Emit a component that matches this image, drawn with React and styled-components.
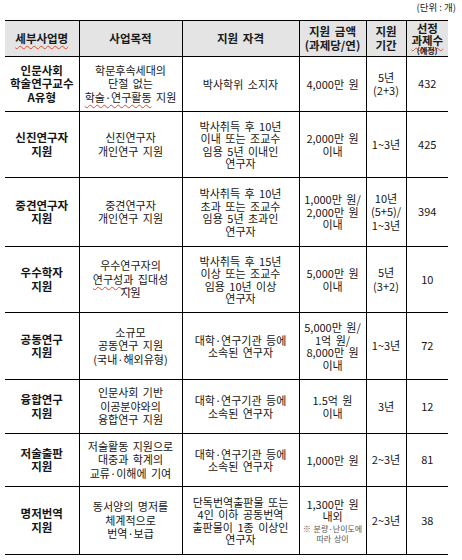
import React from 'react';
import styled, { createGlobalStyle } from 'styled-components';

const GlobalStyle = createGlobalStyle`
    html, body {
        margin: 0;
        padding: 0;
        background: #fff;
    }
    body {
        font-family: "Noto Sans CJK KR", "Noto Sans", sans-serif;
        color: #111;
    }
`;

const COLUMNS = [74, 103, 117, 67, 40, 42];

const ROWS = [
    {
        height: 55,
        cells: ['인문사회\n학술연구교수\nA유형', '학문후속세대의\n단절 없는\n[학술·연구활동] 지원', '박사학위 소지자', '4,000만 원', '5년\n(2+3)', '432']
    },
    {
        height: 66,
        cells: ['신진연구자\n지원', '신진연구자\n개인연구 지원', '박사취득 후 10년\n이내 또는 조교수\n임용 5년 이내인\n연구자', '2,000만 원\n이내', '1~3년', '425']
    },
    {
        height: 69,
        cells: ['중견연구자\n지원', '중견연구자\n개인연구 지원', '박사취득 후 10년\n초과 또는 조교수\n임용 5년 초과인\n연구자', '1,000만 원/\n2,000만 원\n이내', '10년\n(5+5)/\n1~3년', '394']
    },
    {
        height: 66,
        cells: ['우수학자\n지원', '우수연구자의\n[연구성과] 집대성\n지원', '박사취득 후 15년\n이상 또는 조교수\n임용 10년 이상\n연구자', '5,000만 원\n이내', '5년\n(3+2)', '10']
    },
    {
        height: 67,
        cells: ['공동연구\n지원', '소규모\n공동연구 지원\n(국내·해외유형)', '대학·연구기관 등에\n소속된 연구자', '5,000만 원/\n1억 원/\n8,000만 원\n이내', '1~3년', '72']
    },
    {
        height: 54,
        cells: ['융합연구\n지원', '인문사회 기반\n이공분야와의\n융합연구 지원', '대학·연구기관 등에\n소속된 연구자', '1.5억 원\n이내', '3년', '12']
    },
    {
        height: 53,
        cells: ['저술출판\n지원', '저술활동 지원으로\n대중과 학계의\n교류·이해에 기여', '대학·연구기관 등에\n소속된 연구자', '1,000만 원', '2~3년', '81']
    },
    {
        height: 68,
        cells: ['명저번역\n지원', '동서양의 명저를\n체계적으로\n번역·보급', '단독번역출판물 또는\n4인 이하 공동번역\n출판물이 1종 이상인\n연구자', '1,300만 원\n내외', '2~3년', '38'],
        note: '※ 분량·난이도에\n따라 상이'
    }
];

// "[...]" marks the words that carry the spell-check squiggle in the picture
const renderText = (text) =>
    text.split('\n').map((line, i) => (
        <React.Fragment key={i}>
            {i > 0 && <br />}
            {line.split(/(\[[^\]]+\])/).map((part, j) =>
                part.startsWith('[') ? (
                    <Squiggle key={j}>{part.slice(1, -1)}</Squiggle>
                ) : (
                    part
                )
            )}
        </React.Fragment>
    ));

export default function App() {
    return (
        <Page>
            <GlobalStyle />
            <Unit>(단위 : 개)</Unit>
            <Table>
                <colgroup>
                    {COLUMNS.map((w, i) => (
                        <col key={i} style={{ width: w }} />
                    ))}
                </colgroup>
                <thead>
                    <HeadRow>
                        <HeadCell><Squiggle>세부사업명</Squiggle></HeadCell>
                        <HeadCell>사업목적</HeadCell>
                        <HeadCell>지원 자격</HeadCell>
                        <HeadCell>지원 금액<br />(과제당/연)</HeadCell>
                        <HeadCell>지원<br />기간</HeadCell>
                        <HeadCell $tight>
                            선정<br />
                            <Squiggle>과제수</Squiggle>
                            <Small>(예정)</Small>
                        </HeadCell>
                    </HeadRow>
                </thead>
                <tbody>
                    {ROWS.map((row, r) => (
                        <BodyRow key={r} style={{ height: row.height }}>
                            {row.cells.map((cell, c) => (
                                <Cell key={c} $bold={c === 0} $tight={c === 2 || c === 3}>
                                    {renderText(cell)}
                                    {c === 3 && row.note && <Note>{renderText(row.note)}</Note>}
                                </Cell>
                            ))}
                        </BodyRow>
                    ))}
                </tbody>
            </Table>
        </Page>
    );
}

const Page = styled.div`
    width: 462px;
    padding: 0 0 0 5px;
    box-sizing: border-box;
`;

const Unit = styled.div`
    width: 451px;
    text-align: right;
    font-size: 9.5px;
    line-height: 13px;
    height: 20px;
    padding-top: 1px;
    box-sizing: border-box;
    color: #222;
`;

const Table = styled.table`
    width: 443px;
    table-layout: fixed;
    border-collapse: collapse;
    font-size: 11px;
    word-spacing: 2px;

    td, th {
        border: 1px solid #000;
        padding: 0 1px;
        text-align: center;
        vertical-align: middle;
    }
    td:first-child, th:first-child {
        border-left: none;
    }
    td:last-child, th:last-child {
        border-right: none;
    }
`;

const HeadRow = styled.tr`
    height: 36px;
    background: #e4e4e4;
`;

const HeadCell = styled.th`
    font-weight: bold;
    font-size: 11.5px;
    line-height: ${(p) => (p.$tight ? '11.5px' : '13.5px')};
    color: #1a1a1a;
    padding-top: ${(p) => (p.$tight ? '1px' : '0')} !important;
`;

const BodyRow = styled.tr`
    background: #fff;
`;

const Cell = styled.td`
    font-weight: ${(p) => (p.$bold ? 'bold' : 'normal')};
    font-size: ${(p) => (p.$bold ? '11.5px' : '11px')};
    line-height: ${(p) => (p.$tight ? '12.5px' : '13.5px')};
    color: #161616;
`;

const Squiggle = styled.span`
    text-decoration: underline wavy #e0482a;
    text-decoration-thickness: 1px;
    text-underline-offset: 2px;
`;

const Small = styled.span`
    display: block;
    font-size: 8px;
    line-height: 9px;
`;

const Note = styled.div`
    font-size: 8px;
    line-height: 10px;
    color: #555;
    word-spacing: 1px;
    margin-top: 1px;
`;
